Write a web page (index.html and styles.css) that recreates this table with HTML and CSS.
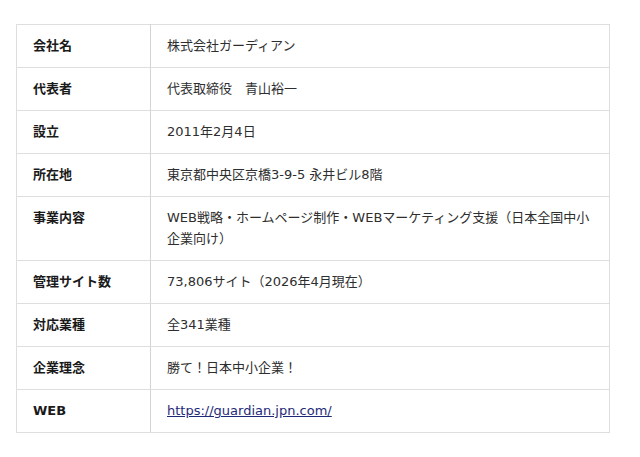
FILE: index.html
```html
<!DOCTYPE html>
<html lang="ja">
<head>
<meta charset="utf-8">
<link rel="stylesheet" href="styles.css">
</head>
<body>
<div class="wrap">
<table class="info">
<tr><th>会社名</th><td>株式会社ガーディアン</td></tr>
<tr><th>代表者</th><td>代表取締役　青山裕一</td></tr>
<tr><th>設立</th><td>2011年2月4日</td></tr>
<tr><th>所在地</th><td>東京都中央区京橋3-9-5 永井ビル8階</td></tr>
<tr><th>事業内容</th><td>WEB戦略・ホームページ制作・WEBマーケティング支援（日本全国中小企業向け）</td></tr>
<tr><th>管理サイト数</th><td>73,806サイト（2026年4月現在）</td></tr>
<tr><th>対応業種</th><td>全341業種</td></tr>
<tr><th>企業理念</th><td>勝て！日本中小企業！</td></tr>
<tr><th>WEB</th><td><a class="link" href="#">https://guardian.jpn.com/</a></td></tr>
</table>
</div>
</body>
</html>
```
FILE: styles.css
```css
html, body { margin: 0; padding: 0; background: #fff; }
.wrap { padding: 24px 16px; }
.info {
  border-collapse: collapse;
  width: 594px;
  font-family: "DejaVu Sans", "Noto Sans CJK JP", sans-serif;
  font-size: 13px;
  line-height: 21px;
  color: #2e2e2e;
}
.info th, .info td {
  border: 1px solid #dedede;
  padding: 10px 16px 11px;
  vertical-align: top;
  text-align: left;
}
.info th {
  width: 101px;
  font-weight: bold;
  color: #1a1a1a;
  border-right-color: #d4d4d4;
}
.link { color: #1e2a78; text-decoration: underline; }
```
